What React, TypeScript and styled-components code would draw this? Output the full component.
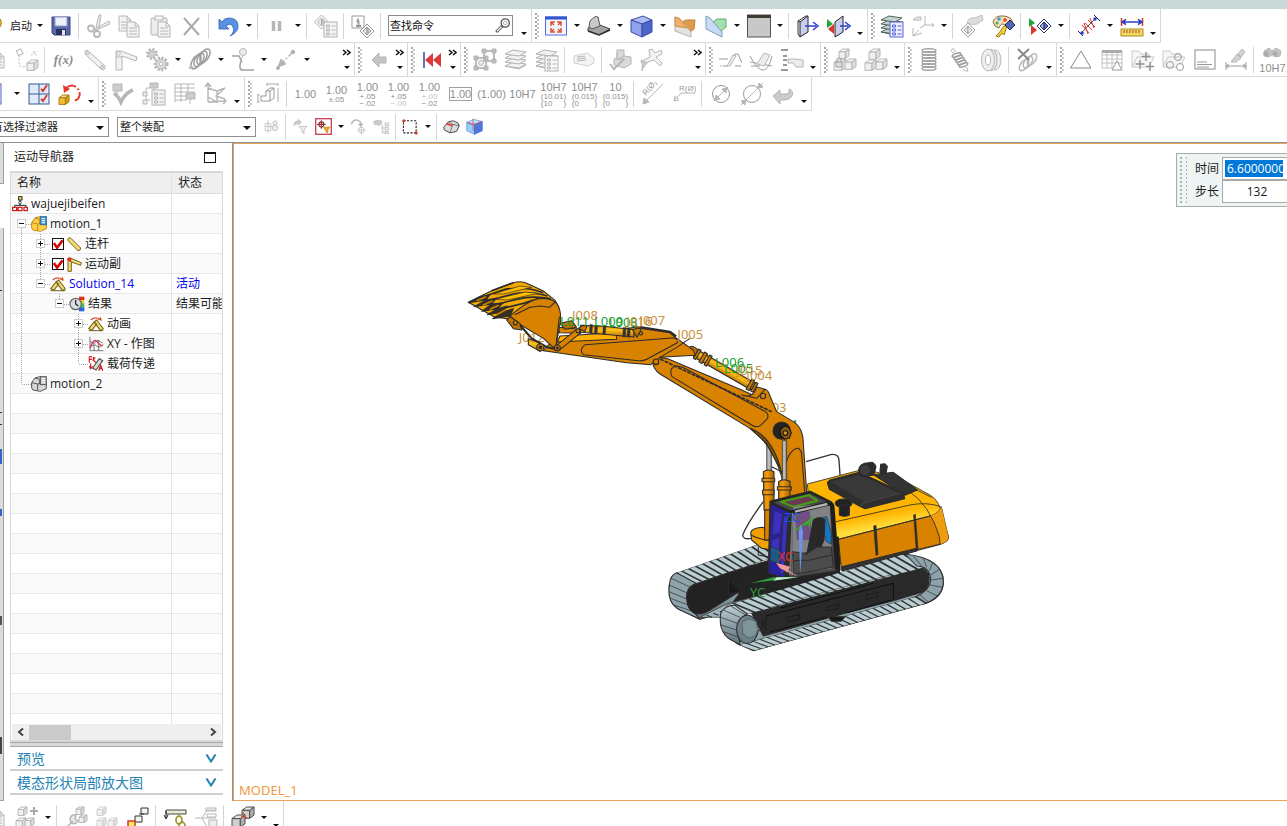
import React, { ReactNode } from "react";
import styled, { createGlobalStyle, css } from "styled-components";

const GlobalStyle = createGlobalStyle`
  * { box-sizing: border-box; }
  html, body { margin: 0; padding: 0; }
  body {
    background: #fff;
    color: #1c1c1c;
    font: 12px/16px "Open Sans", "Noto Sans CJK SC", sans-serif;
    overflow: hidden;
  }
  button, input, select { font: inherit; color: inherit; margin: 0; padding: 0; }
`;

/* ---------- icons, all on a 24 unit grid ---------- */

const F = "#ececec";
const D = "#b2b2b2";

const doc = (x: number, y: number) => (
  <>
    <path d={`M${x} ${y}h8l4 4v11h-12z`} fill="#f4f4f4" />
    <path d={`M${x + 2} ${y + 6}h8M${x + 2} ${y + 9}h8M${x + 2} ${y + 12}h8M${x + 8} ${y}v4h4`} />
  </>
);

const cube = (x: number, y: number, s: number, top = "#fafafa", left = "#f0f0f0", right = "#dedede") => (
  <>
    <path d={`M${x} ${y + s * 0.28}l${s * 0.38} ${-s * 0.28}h${s * 0.62}l${-s * 0.36} ${s * 0.28}z`} fill={top} />
    <path d={`M${x} ${y + s * 0.28}h${s * 0.64}v${s * 0.66}h${-s * 0.64}z`} fill={left} />
    <path d={`M${x + s * 0.64} ${y + s * 0.28}l${s * 0.36} ${-s * 0.28}v${s * 0.68}l${-s * 0.36} ${s * 0.26}z`} fill={right} />
  </>
);

const diamond = (x: number, y: number, edge: string, fill: string, core: string) => (
  <>
    <path d={`M${x - 7} ${y}l7-7 7 7-7 7z`} fill="#fafafa" stroke={edge} />
    <path d={`M${x - 4} ${y}l4-4v8z`} fill={fill} stroke={edge} />
    <path d={`M${x + 4} ${y}l-4-4v8z`} fill={core} stroke={edge} />
  </>
);

const layers = (edge: string, fill: string) => (
  <>
    {[17, 13, 9, 5].map((y) => (
      <path key={y} d={`M1 ${y + 1}l8-4 13 2-7 4z`} fill={fill} stroke={edge} />
    ))}
    <path d="M1 18l14 3 7-4" stroke={edge} />
  </>
);

const listCard = (edge: string, fill: string) => (
  <>
    <rect x="10" y="8" width="13" height="15" fill={fill} stroke={edge} />
    <path d="M12.500 11h3v2h-3zM12.500 15h3v2h-3zM12.500 19h3v2h-3zM17.500 12h4M17.500 16h4M17.500 20h4" stroke={edge} />
  </>
);

const gear = (x: number, y: number, r: number) => (
  <>
    <circle cx={x} cy={y} r={r} strokeWidth="3" strokeDasharray="2 1.500" />
    <circle cx={x} cy={y} r={r - 1} fill="#dcdcdc" />
    <circle cx={x} cy={y} r={r / 3} fill="#fff" />
  </>
);

const icons: Record<string, ReactNode> = {
  logo: (
    <>
      <path d="M12 2q10 1 8 9l-7 12q-8-1-8-8z" fill="#f3c31d" stroke="#a07a10" />
      <path d="M13 5q5 1 3 6l-5 5" stroke="#3b9bd0" strokeWidth="3" />
      <path d="M7 16l5 6" stroke="#2f8c3b" strokeWidth="2" />
    </>
  ),
  save: (
    <>
      <path d="M3 3h18v18h-16l-2-2z" fill="#5868a8" stroke="#38457f" />
      <rect x="6" y="3" width="12" height="9" fill="#eef1f8" stroke="#8f9bc8" />
      <rect x="7" y="15" width="10" height="6" fill="#26305c" stroke="none" />
      <rect x="13" y="16" width="3" height="5" fill="#dfe4f2" stroke="none" />
    </>
  ),
  cut: (
    <>
      <path d="M13 1l2 0-2 13-3-1zM23 7l-14 8 1 1 14-6z" fill={F} />
      <circle cx="5" cy="14.500" r="3" strokeWidth="1.800" />
      <circle cx="11" cy="20" r="3" strokeWidth="1.800" />
    </>
  ),
  copy: <>{doc(2, 2)}{doc(10, 8)}</>,
  paste: (
    <>
      <rect x="3" y="4" width="16" height="17" rx="1" fill={F} />
      <rect x="7" y="2" width="8" height="4" fill="#f6f6f6" />
      {doc(10, 8)}
    </>
  ),
  del: <path d="M5 4l15 17M20 4l-15 17" strokeWidth="2" stroke="#a9a9a9" />,
  undo: <path d="M3 5v10h10l-3-3q5-4 7 1t-3 9q9-4 8-11t-9-7q-5 0-7 4z" fill="#5b8fe0" stroke="#2b62bd" strokeWidth=".8" />,
  pause: <path d="M8.500 7v10M14.500 7v10" strokeWidth="3.500" />,
  repeat: <>{diamond(7.500, 8, D, F, "#c4c4c4")}{listCard(D, "#f4f4f4")}</>,
  info: (
    <>
      <rect x="1" y="2" width="12" height="12" stroke="#999" />
      <path d="M7 4.500v2M5.500 7.500h2v4M5 12h5" strokeWidth="1.800" stroke="#999" />
      {diamond(16, 17, "#999", F, "#c4c4c4")}
    </>
  ),
  search: (
    <>
      <circle cx="15" cy="8" r="5.500" stroke="#555" strokeWidth="1.800" />
      <circle cx="15" cy="8" r="2.500" stroke="#999" />
      <path d="M11 12l-8 8" stroke="#555" strokeWidth="4" />
      <path d="M10 13l-6 6" stroke="#fff" strokeWidth="1.500" />
    </>
  ),
  fit: (
    <>
      <rect x="1.500" y="3" width="21" height="18" fill="#f4f6ff" stroke="#4a6ad8" />
      <path d="M1 4h22" stroke="#3154cf" strokeWidth="3" />
      <path d="M7 12v-4h4M7 8l3 3M17 12v-4h-4M17 8l-3 3M7 14v4h4M7 18l3-3M17 14v4h-4M17 18l-3-3" stroke="#e0542c" strokeWidth="1.500" />
    </>
  ),
  shadeBase: (
    <>
      <path d="M1 14l12-3 10 4-11 6-11-4z" fill="#a4a4a4" stroke="#444" />
      <path d="M2 13l1-6q5-6 8-4l2 9-8 3z" fill="#c9c9c9" stroke="#555" />
      <path d="M1 17l11 4 11-5" stroke="#333" strokeWidth="1.500" />
    </>
  ),
  cubeBlue: (
    <>
      <path d="M1 6l12-4 9 4-10 4z" fill="#aabcf6" stroke="#3c4da8" />
      <path d="M1 6l11 4v13l-11-5z" fill="#8fa3ec" stroke="#3c4da8" />
      <path d="M12 10l10-4v12l-10 5z" fill="#4c66c8" stroke="#3c4da8" />
    </>
  ),
  clipOrange: (
    <>
      <path d="M9 8l4-2h9l-1 9-5 4z" fill="#e09a4c" stroke="#c08040" />
      <path d="M2 3l4 1 12 14v5l-16-6z" fill="#e4e2de" stroke="#b4b4b4" />
      <path d="M2 3l5 2 7 9-12-2z" fill="#f2b06a" stroke="#d0904a" />
    </>
  ),
  clipGreen: (
    <>
      <path d="M9 8l4-3h9v8l-6 5z" fill="#a4e0ac" stroke="#5aa868" />
      <path d="M2 2l4 2 12 14v5l-16-8z" fill="#c6dcf4" stroke="#7d9bc0" />
    </>
  ),
  background: (
    <>
      <rect x="0.500" y="1" width="23" height="22" fill="#c8c8c8" stroke="#55524c" />
      <path d="M0 2.500h24" stroke="#3f3d33" strokeWidth="3" />
    </>
  ),
  door: (
    <>
      <path d="M4 8l8-6v16l-8 5z" fill="#c6cef0" stroke="#222" />
      <path d="M4 8l-2-1v13l2 3M2 7l8-5h2" stroke="#333" />
      <path d="M9 12h11M17 8l5 4-5 4" stroke="#2b3fd0" strokeWidth="1.500" />
    </>
  ),
  doorSwap: (
    <>
      <path d="M8 8l8-6v16l-8 5z" fill="#c6cef0" stroke="#222" />
      <path d="M13 12h8M18 8l5 4-5 4" stroke="#2b3fd0" strokeWidth="1.500" />
      <path d="M0 5l6 5-6 4z" fill="#1ea83a" stroke="none" />
      <path d="M7 10v10l-6-5z" fill="#d8372c" stroke="none" />
    </>
  ),
  layerSettings: <>{layers("#4d6458", "#c4d6cb")}{listCard("#5561d8", "#eef0ff")}</>,
  layerStack: layers(D, "#f2f2f2"),
  layerCard: <>{layers(D, "#f2f2f2")}{listCard(D, "#f8f8f8")}</>,
  wcs: (
    <>
      <path d="M14 2v9h9M14 11l-5 3M21 9l2 2-2 2M2 14v8l9-3M2 22l6-6" />
      <path d="M2 6q3-4 8-3v3z" fill={F} />
    </>
  ),
  editObj: (
    <>
      {diamond(8, 16, "#a4a4a4", F, "#eee")}
      <path d="M7 8q2-5 8-4l7-3 1 5-6 4q-6 2-10-2z" fill="#dcdcdc" stroke="#c4c4c4" />
    </>
  ),
  palette: (
    <>
      <path d="M2 8q2-7 11-6t9 9q-4 3-8 0t-6 3q-5-1-6-6z" fill="#f6dcb6" stroke="#8c6a3c" />
      <circle cx="8" cy="5" r="1.800" fill="#2aa3d8" stroke="none" />
      <circle cx="14" cy="6" r="1.800" fill="#e23a2a" stroke="none" />
      <circle cx="6" cy="9" r="1.500" fill="#3bb04a" stroke="none" />
      <path d="M13 12l-5 7-3 3 3 1 3-4 2 2 3-9z" fill="#f4cf3a" stroke="#9a7a14" />
      <path d="M14 11l5-5 5 5-5 5z" fill="#5568b8" stroke="#222a5c" />
    </>
  ),
  showHide: (
    <>
      <path d="M1 4l6 5-6 4z" fill="#1ea83a" stroke="none" />
      <path d="M3 11l6 5-6 5z" fill="#d8372c" stroke="none" />
      {diamond(16, 12, "#26306a", "#aab6ea", "#5a6cc8")}
    </>
  ),
  measureArrow: (
    <>
      <path d="M3 20l17-17" stroke="#555" />
      <path d="M1 17l5 5M17 1l6 6" stroke="#222" />
      <path d="M5 11l7 8M8 9l7 7M11 6l7 7M7 9l4 11M13 4l4 10" stroke="#d8372c" />
      <circle cx="5" cy="19" r="1.800" fill="#2b3fd0" stroke="none" />
      <circle cx="18" cy="5" r="1.800" fill="#2b3fd0" stroke="none" />
    </>
  ),
  ruler: (
    <>
      <path d="M1.500 4v8M22.500 4v8" stroke="#d8372c" strokeWidth="1.500" />
      <path d="M3 8h18M6 5.500l-4 2.500 4 2.500M18 5.500l4 2.500-4 2.500" stroke="#2b3fc0" strokeWidth="1.500" />
      <rect x="1" y="15" width="22" height="7" fill="#f2d860" stroke="#b09020" />
      <path d="M4 16v3M7 16v3M10 16v3M13 16v3M16 16v3M19 16v3" stroke="#b0452a" />
    </>
  ),
  docSmall: doc(8, 5),
  linkCubes: (
    <>
      <rect x="2" y="2" width="5" height="5" transform="rotate(-25 4 4)" />
      <path d="M4 7v10l3 3M8 19l6-2M16 7l6-4M18 3l4 5" strokeDasharray="2 1.500" />
      {cube(12, 12, 11)}
    </>
  ),
  link: (
    <>
      <path d="M4 2l18 16q1 4-3 4l-17-16q-1-4 2-4z" fill="#f2f2f2" />
      <circle cx="5" cy="5" r="1.500" /><circle cx="19" cy="19" r="1.500" />
    </>
  ),
  joint: (
    <>
      <path d="M2 3h5l16 6-1 4-14-5v14h-6z" fill="#f2f2f2" />
      <circle cx="4.500" cy="5.500" r="1.800" fill="#fff" />
      <path d="M2 9h6" />
    </>
  ),
  gears: <>{gear(7, 6, 4.500)}{gear(16, 16, 6)}</>,
  spring: (
    <>
      {[0, 3, 6, 9].map((o) => <ellipse key={o} cx={8 + o} cy={14 - o * 0.7} rx="4" ry="7.500" transform={`rotate(30 ${8 + o} ${14 - o * 0.7})`} strokeWidth="1.500" stroke="#9c9c9c" />)}
      <path d="M1 20l4-1" strokeWidth="2" />
    </>
  ),
  probe: (
    <>
      <path d="M1 8h7l3 6M10 13q-3 9 2 9h11" strokeWidth="1.500" stroke="#a0a0a0" />
      <circle cx="12" cy="4" r="3.500" fill={F} />
      <path d="M12 7l-3 8" />
    </>
  ),
  vector: (
    <>
      <path d="M4 19l15-15" strokeWidth="1.500" strokeDasharray="9 2 2 2" />
      <path d="M4 19l3-8 5 5z" fill={D} />
      <circle cx="19" cy="4" r="1.800" fill="#aaa" /><circle cx="4" cy="20" r="1.500" fill="#aaa" />
    </>
  ),
  arrowLeft: <path d="M5 12l7-7v4h7v6h-7v4z" fill="#c4c4c4" stroke="#b4b4b4" />,
  rewind: (
    <>
      <path d="M4 4v16" stroke="#39469c" strokeWidth="1.500" />
      <path d="M13 5v14l-8-7zM21 5v14l-8-7z" fill="#d93a3a" stroke="none" />
    </>
  ),
  group: (
    <>
      <rect x="3" y="10" width="10" height="10" strokeWidth="1.800" />
      <rect x="11" y="3" width="10" height="10" strokeWidth="1.800" />
      <path d="M1 8h4v4h-4zM11 8h4v4h-4zM1 18h4v4h-4zM11 18h4v4h-4zM19 1h4v4h-4zM9 1h4v4h-4zM19 11h4v4h-4z" fill="#bbb" />
      <circle cx="8" cy="15" r="2.500" fill={F} />
    </>
  ),
  tag: (
    <>
      <path d="M2 8l13-3 7 5v5l-6 3-14-3z" fill="#f4f4f4" stroke="#d0d0d0" />
      <path d="M5 9l8-1M5 11l9-1M5 13l9-1" />
    </>
  ),
  checkPart: (
    <>
      <path d="M8 2h7v6l7 1v7l-7 4-10-3v-6l3-1z" fill="#dadada" />
      <path d="M8 4v7h8M15 8l-7 4" />
      <path d="M1 16l4 5 10-10" strokeWidth="2" />
    </>
  ),
  movePart: (
    <>
      <path d="M9 2l3-1 3 4 6-3 1 4-6 3 6 6-2 3-6-6-9 3q-3 2-3 8 0-8 2-11l6-3z" fill="#f2f2f2" />
      <path d="M1 12l6 3-4 5z" fill="#ccc" />
    </>
  ),
  sketchA: <><path d="M1 11h9M5 18h5l7-12h3l4 9M17 18h6" stroke="#999" /><path d="M2 18l2 0M9 18l6-11 3 1-6 10z" fill={F} /></>,
  sketchB: (
    <>
      <path d="M1 8q6 12 12 14t10-14M2 18h9M1 14l22 4" stroke="#a0a0a0" />
      <path d="M8 16l7-11 6 2-6 11z" fill={F} />
    </>
  ),
  pointer: (
    <>
      <path d="M1 2h7M1 22h7M3 8h4M3 12h4M3 17h4" strokeWidth="1.800" stroke="#999" />
      <path d="M8 11h7l8 1v7h-7l-3-4h-5z" fill={F} />
    </>
  ),
  asmLock: <>{cube(6, 1, 10)}{cube(1, 11, 12)}{cube(12, 11, 11)}<path d="M4 14v-3q2-3 4 0v3M3 14h6v5h-6z" fill="#ddd" stroke="#a0a0a0" /></>,
  asmPart: <>{cube(5, 1, 11)}{cube(1, 12, 11)}{cube(12, 11, 11)}</>,
  coil: (
    <>
      {[2, 5, 8, 11, 14, 17, 20].map((y) => <ellipse key={y} cx="12" cy={y + 0.5} rx="7" ry="1.800" strokeWidth="1.400" stroke="#a0a0a0" />)}
    </>
  ),
  tension: (
    <>
      {[0, 2.500, 5, 7.500, 10].map((o) => <ellipse key={o} cx={8.500 + o * 0.7} cy={7 + o} rx="4.500" ry="1.600" transform={`rotate(-20 ${8.500 + o * 0.7} ${7 + o})`} strokeWidth="1.500" stroke="#a0a0a0" />)}
      <path d="M7 6q-5-2-3-5 3-1 3 3M16 18q4 1 4 5-3 1-5-2" />
    </>
  ),
  disc: (
    <>
      <ellipse cx="16" cy="12" rx="6" ry="10" fill={F} /><ellipse cx="12" cy="12" rx="6" ry="10.500" fill={F} />
      <ellipse cx="9" cy="12" rx="6.500" ry="11" fill="#efefef" /><ellipse cx="9" cy="12" rx="2.500" ry="5" fill="#fff" />
    </>
  ),
  coilDel: (
    <>
      {[0, 4, 8].map((o) => <ellipse key={o} cx={8 + o} cy={17 - o * 0.7} rx="3.500" ry="6.500" transform={`rotate(35 ${8 + o} ${17 - o * 0.7})`} strokeWidth="1.500" />)}
      <path d="M2 1l11 11M13 1l-11 10" stroke="#8a8a8a" strokeWidth="2" />
    </>
  ),
  triangle: <path d="M12 3l10 17h-20.500z" stroke="#888" />,
  gridTri: (
    <>
      <path d="M2 3h20v17h-20zM2 7h20M2 11h20M2 15h20M7 3v17M12 3v17M17 3v17" stroke="#c0c0c0" />
      <path d="M2 3.500h20" stroke="#aaa" strokeWidth="3" /><path d="M17 13l5 9h-10z" fill="#fff" stroke="#999" />
    </>
  ),
  folderPlus: (
    <>
      <path d="M1 19v-16h7l2 3h8v3M1 19l5-10h17l-5 10z" fill="#f6f6f6" stroke="#cacaca" />
      <path d="M15 4v9M10.500 8.500h9M9 12v9M4.500 16h9M19 14v9M15 18.500h8" stroke="#8f8f8f" strokeWidth="1.400" />
    </>
  ),
  folderRing: (
    <>
      <path d="M1 19v-16h7l2 3h8v3M1 19l5-10h17l-5 10z" fill="#f6f6f6" stroke="#cacaca" />
      <circle cx="16" cy="9" r="3.500" stroke="#999" /><circle cx="8" cy="17" r="3.500" stroke="#999" /><circle cx="18" cy="19" r="3.500" fill="#fff" stroke="#999" />
    </>
  ),
  note: <><rect x="2" y="2" width="20" height="19" stroke="#888" fill="#fff" /><path d="M4 14h10M4 16.500h15M4 19h12" stroke="#999" /></>,
  brush: (
    <>
      <path d="M18 1l3 3-4 5-3-3zM13 6l4 4-5 4h-5z" fill="#d2d2d2" />
      <path d="M2 14v8M22 14v8M2 18h20M5 16l-3 2 3 2M19 16l3 2-3 2" stroke="#999" />
    </>
  ),
  navCheck: (
    <>
      <path d="M2 2h9v7h-9z" fill="#ccc" /><path d="M6 9v4" />
      <path d="M3 11q5 4 7 9 4-9 12-12" strokeWidth="3.500" />
    </>
  ),
  navList: <><path d="M8 1h8v5h-8z" fill="#ccc" /><path d="M12 6v4M4 6v12h4M4 6h4" />{listCard(D, "#f2f2f2")}<path d="M1 10h4v4h-4zM1 18h4v4h-4z" fill={F} /></>,
  navGrid: (
    <>
      <path d="M2 2h20M2 6h20M2 10h20M2 14h12M2 18h12M2 2v18M8 2v18M15 2v12" />
      <path d="M13 11h9v6h-9zM17 17v5" fill="#ccc" />
    </>
  ),
  axis3d: <path d="M4 20v-18M1 5l3-4 3 4M4 20l18-1M4 6l9 3v11l-9-5M13 9l8-3-9 8 9 3M19 16l3 3-3 3" strokeWidth="1.400" />,
  dimPart: (
    <>
      <path d="M9 9h4v10h-9v-5h5zM13 9l4-3v10l-4 3M9 9l4-3h4" stroke="#999" />
      <path d="M1 13v7M0 13h3M0 20h3M10 2h11M10 1v3M21 1v3M21 6v14" stroke="#aaa" />
    </>
  ),
  leader: <><path d="M2 22l20-20M2 22l1-6 5 4z" fill="#bbb" /><text x="0" y="0" transform="translate(5 14) rotate(-50)" fontSize="8" fill="#999" stroke="none" fontFamily="Liberation Sans">R(Ø)</text></>,
  leaderFlat: <><path d="M2 19l7-8h14M2 19l1-5 4 4z" fill="none" /><text x="7" y="9" fontSize="8" fill="#999" stroke="none" fontFamily="Liberation Sans">R(Ø)</text></>,
  diaIn: <><circle cx="12" cy="12" r="8.500" stroke="#999" /><path d="M5 19l14-14M6 18l1-5 4 4zM18 6l-1 5-4-4z" fill="#bbb" /></>,
  diaOut: <><circle cx="12" cy="12" r="8.500" stroke="#999" /><path d="M1 23l22-22M6 18l-5 1 4 4zM18 6l5-1-4-4z" fill="#bbb" /></>,
  back: <path d="M2 14l7-6v4h7q3-1 2-5 5 2 3 7-2 4-8 4h-4v4z" fill="#ccc" stroke="#b4b4b4" />,
  frame: <rect x="0" y="2" width="17" height="20" stroke="#5561c8" fill="#f2f4ff" />,
  checks: (
    <>
      <rect x="2" y="2" width="20" height="20" fill="#dfeafd" stroke="#3d5a94" />
      <path d="M12 2v20M2 12h20" stroke="#3d5a94" />
      <path d="M14 7l2 2 4-6M14 17l2 2 4-6" stroke="#d8372c" strokeWidth="1.800" />
    </>
  ),
  rotateCube: (
    <>
      <g stroke="#a87c14">{cube(1, 13, 10, "#ffe58a", "#f5bf33", "#d69a18")}</g>
      <path d="M8 6q6-5 11 0t1 11l-4 2" stroke="#e23a2a" strokeWidth="1.800" strokeDasharray="11 2 2 2" />
      <path d="M5 3l1 8 6-4z" fill="#e23a2a" stroke="none" />
    </>
  ),
  selAsm: <><path d="M3 8h8v10h-8zM7 3v18M3 12h10" /><circle cx="17" cy="7" r="3" fill={F} /><circle cx="17" cy="14" r="4" fill={F} /></>,
  filterRedo: <><path d="M3 8q1-4 6-4v-2l4 4-4 4v-2q-4-1-6 3z" fill="#ccc" /><path d="M10 12h11l-4 5v5l-3-2v-3z" fill={F} /></>,
  filterTarget: (
    <>
      <rect x="1" y="1" width="22" height="22" stroke="#c43a50" strokeWidth="1.800" fill="#fff" />
      <circle cx="9" cy="9" r="3.500" stroke="#8a3030" strokeWidth="1.500" /><path d="M9 3v12M3 9h12" stroke="#8a3030" strokeWidth="1.500" />
      <path d="M12 13h9l-3 4v4l-3-2v-2z" fill="#f4a824" stroke="#c07c10" />
    </>
  ),
  redoTarget: <><path d="M2 9q2-7 8-6t5 7M12 8l3 3 3-3" strokeWidth="2" /><circle cx="16" cy="17" r="4" /><path d="M16 11v12M10 17h12" /></>,
  handTree: <><path d="M1 5q6-4 12 0l-3 5-8-1z" fill="#ccc" /><path d="M13 9v12h4M13 14h4M17 7h5v4h-5zM17 13h5v4h-5zM17 19h5v3h-5z" fill={F} /></>,
  marquee: (
    <>
      <rect x="2" y="4" width="18" height="17" stroke="#222" strokeWidth="1.500" strokeDasharray="3 2" />
      <circle cx="2.500" cy="4" r="2.200" fill="#d8372c" stroke="none" /><circle cx="20" cy="21" r="2.200" fill="#d8372c" stroke="none" />
    </>
  ),
  eraser: (
    <>
      <path d="M1 13l7-8q7-3 13 2l2 4-4 8-9 2-8-4z" fill="#dcdcdc" stroke="#4a4a4a" strokeWidth="1.400" />
      <path d="M10 20l4-11 9 2M14 9l-6-3" stroke="#4a4a4a" /><path d="M5 8l8 3" stroke="#e23a2a" strokeWidth="2.500" />
    </>
  ),
  cubeRed: (
    <>
      <path d="M1 6l10-4 12 3-11 4z" fill="#bfe2ff" stroke="#6a8ad0" /><path d="M1 6l11 3v14l-11-5z" fill="#8fd0ff" stroke="#6a8ad0" />
      <path d="M12 9l11-4v13l-11 5z" fill="#4a78e0" stroke="#4a6ab8" /><path d="M10 1v17M2 7l9 3M12 9l10-4" stroke="#e24a5a" strokeWidth="1.200" />
    </>
  ),
  addPart: <>{cube(3, 1, 9)}{cube(1, 12, 10)}{cube(10, 12, 9)}<path d="M19 1v8M15 5h8" stroke="#aaa" strokeWidth="2" /></>,
  wrench: <><path d="M1 23l8-8M6 13q1-5 6-4l-1 4 3 2q-3 4-7 2z" fill={F} strokeWidth="1.500" />{cube(12, 1, 8)}{cube(15, 9, 8)}</>,
  partsFade: <g stroke="#cfcfcf">{cube(2, 1, 9)}{cube(2, 12, 9)}{cube(13, 12, 9)}</g>,
  stairs: (
    <>
      <path d="M9 10h7v6h-7zM15 2h7v6h-7z" fill="#f4f4f4" stroke="#333" />
      <path d="M13 8h5" stroke="#333" /><rect x="2" y="15" width="7" height="8" fill="#ffe85a" stroke="#d8372c" strokeWidth="1.500" />
    </>
  ),
  constraint: (
    <>
      <path d="M3 4h20v4h-20z" fill="#e8ecd8" stroke="#444" /><path d="M3 5v7M1 9l2 4 2-4" stroke="#222" />
      <ellipse cx="16" cy="14" rx="3" ry="4" stroke="#a0983a" strokeWidth="1.800" /><ellipse cx="19" cy="20" rx="3" ry="4" stroke="#a0983a" strokeWidth="1.800" />
    </>
  ),
  tree: <><path d="M1 12h7l5-8h9M8 12h14M8 12l5 9h2M12 2h10v3h-10zM13 8h9v3h-9z" fill="none" /><rect x="15" y="14" width="8" height="9" fill={F} /></>,
  boxesDark: (
    <>
      <g stroke="#4c4c4c">{cube(11, 1, 12, "#e4e4e4", "#cfcfcf", "#b0b0b0")}{cube(1, 9, 13, "#e4e4e4", "#cfcfcf", "#b0b0b0")}</g>
      <path d="M12 6l3 6M10 10l6 2" stroke="#e23a2a" />
    </>
  ),
  binoculars: <><path d="M4 5l5-3 3 3 4-3 5 3-1 5-4 1-3-3-4 3-4-1z" fill="#c4c4c4" /><circle cx="6" cy="8" r="2.500" fill="#aaa" /><circle cx="15" cy="8" r="2.500" fill="#aaa" /></>,
  /* tree glyphs */
  tRoot: (
    <g strokeWidth="1.500">
      <rect x="10" y="1" width="5" height="5" stroke="#222" fill="#ffe85a" /><path d="M12 6v9M4 17v-3h17v3" stroke="#222" />
      <circle cx="12" cy="10" r="2" stroke="#444" fill="#fff" />
      <path d="M1 17h6v5h-6zM9 17h6v5h-6zM18 17h5v5h-5z" fill="#fff" stroke="#d02020" strokeWidth="2" />
    </g>
  ),
  tMotion: (
    <g strokeWidth="1.500" stroke="#c08a10">
      <path d="M1 10l5-7 7-2 5 2 5 6v10l-9 4-11-2-2-3z" fill="#ffcf4a" /><path d="M1 10l9 2 13-3M10 12v10M6 3l7 2v7" />
      <rect x="14" y="1" width="9" height="12" fill="#4a9ad0" stroke="#2c6c98" /><path d="M16 4h5M16 7h5M16 10h5" stroke="#fff" />
    </g>
  ),
  tMotionGray: (
    <g strokeWidth="1.500" stroke="#555">
      <path d="M1 10l5-7 7-2 5 2 5 6v10l-9 4-11-2-2-3z" fill="#d8d8d8" /><path d="M1 10l9 2 13-3M10 12v10M6 3l7 2v7" />
      <rect x="14" y="1" width="9" height="12" fill="#c4c4c4" /><path d="M16 4h5M16 7h5M16 10h5" stroke="#fff" />
    </g>
  ),
  tLink: <path d="M3 4q3-3 5 0l14 14q0 4-4 4l-14-14q-2-2-1-4z" fill="#f3d978" stroke="#7a6418" strokeWidth="1.500" />,
  tJoint: (
    <g strokeWidth="1.500">
      <path d="M3 4h5v19h-5z" fill="#f3d978" stroke="#7a6418" /><path d="M6 3l17 7-1 4-16-6z" fill="#f3d978" stroke="#7a6418" />
      <circle cx="5" cy="5" r="3" fill="#e02c20" stroke="none" />
    </g>
  ),
  tSolution: (
    <g strokeWidth="1.600">
      <path d="M1 19l8-10 4 3-7 9zM9 9l4-3 10 13-4 3z" fill="#f3d978" stroke="#7a6418" /><path d="M1 22h22" stroke="#7a6418" />
      <path d="M4 6q7-6 13-1" stroke="#e0502c" strokeWidth="2" /><path d="M21 7l-6-1 4-5z" fill="#e0502c" stroke="none" />
    </g>
  ),
  tResult: (
    <>
      <rect x="15" y="1" width="8" height="5" fill="#e02c20" stroke="none" /><rect x="15" y="6" width="8" height="5" fill="#f5d020" stroke="none" />
      <rect x="15" y="11" width="8" height="6" fill="#3fc04a" stroke="none" /><rect x="15" y="17" width="8" height="6" fill="#2a62e0" stroke="none" />
      <circle cx="10" cy="12" r="8.500" fill="#d8dce4" stroke="#666" strokeWidth="1.800" /><path d="M10 6v6l4 3" stroke="#222" strokeWidth="1.800" />
    </>
  ),
  tPlot: (
    <g strokeWidth="1.500">
      <path d="M3 1v21h20M3 8l6 3 6-5 7 5M3 16l7-3 6 4 7-4M9 11v11M16 6v16" stroke="#777" /><path d="M3 18q6-15 10-10t9 7" stroke="#e02c50" strokeWidth="2" />
    </g>
  ),
  tLoad: (
    <g strokeWidth="1.800">
      <path d="M7 18l10-14 5 3-10 14z" fill="#ddd" stroke="#555" /><path d="M2 1h4M2 1v9M2 5h4M8 1v7M11 2l-3 4 4 4M4 11v8M2 15l2 4 3-3M16 22l3-8 3 8M17 19h5" stroke="#d02020" />
    </g>
  ),
};

const Glyph = styled.svg<{ $size?: number }>`
  display: block;
  flex: none;
  width: ${(p) => p.$size ?? 24}px;
  height: ${(p) => p.$size ?? 24}px;
  fill: none;
  stroke: #b6b6b6;
`;

const Icon = ({ name, size }: { name: string; size?: number }) => (
  <Glyph $size={size} viewBox="0 0 24 24" aria-hidden="true">
    {icons[name]}
  </Glyph>
);

/* ---------- tool bars ---------- */

const Page = styled.div`
  height: 100vh;
  display: flex;
  flex-direction: column;
  overflow: hidden;
`;

const TitleStrip = styled.header`
  flex: none;
  height: 9px;
  background: #c9d9d7;
`;

const Row = styled.div<{ $height?: number }>`
  flex: none;
  display: flex;
  height: ${(p) => p.$height ?? 34}px;
  overflow: hidden;
`;

const Group = styled.div<{ $pull?: number; $open?: boolean }>`
  flex: none;
  display: flex;
  align-items: center;
  height: 34px;
  margin-left: ${(p) => -(p.$pull ?? 0)}px;
  padding-right: 1px;
  border-right: 1px solid ${(p) => (p.$open ? "transparent" : "#d8d8d8")};
  border-bottom: 1px solid #dcdcdc;
`;

const Grip = styled.span<{ $tall?: boolean }>`
  flex: none;
  width: 8px;
  height: ${(p) => (p.$tall ? 46 : 26)}px;
  background:
    radial-gradient(circle at 1px 1px, #a8a8a8 1px, transparent 1px) 3px 0 / 4px 4px repeat-y,
    radial-gradient(circle at 1px 1px, #c8c8c8 1px, transparent 1px) 5px 2px / 4px 4px repeat-y;
  ${(p) =>
    p.$tall &&
    css`background:
      radial-gradient(circle at 1px 1px, #b0b4b4 1px, transparent 1px) 1px 0 / 6px 4px;`}
`;

const ToolButton = styled.button<{ $small?: boolean }>`
  flex: none;
  display: flex;
  align-items: center;
  justify-content: center;
  width: ${(p) => (p.$small ? 23 : 31)}px;
  height: 30px;
  border: 0;
  background: none;
`;

const DropButton = styled.button<{ $low?: boolean; $width?: number }>`
  flex: none;
  display: flex;
  flex-direction: column;
  align-items: flex-end;
  justify-content: ${(p) => (p.$low ? "flex-end" : "center")};
  width: ${(p) => p.$width ?? 12}px;
  height: 30px;
  padding: 0 3px ${(p) => (p.$low ? 6 : 0)}px;
  border: 0;
  background: none;
`;

const Arrow = styled.span`
  width: 0;
  height: 0;
  border: 3px solid transparent;
  border-top-color: #111;
  border-bottom-width: 0;
`;

const Divider = styled.span`
  flex: none;
  width: 6px;
  height: 26px;
  background: linear-gradient(#d4d4d4, #d4d4d4) 2px 0 / 1px 100% no-repeat;
`;

const MoreMark = styled.svg`
  width: 9px;
  height: 7px;
  margin-bottom: 10px;
  margin-right: -1px;
  fill: none;
  stroke: #111;
  stroke-width: 1.5;
`;

const Tool = ({ icon, label, small }: { icon: string; label: string; small?: boolean }) => (
  <ToolButton type="button" aria-label={label} $small={small}>
    <Icon name={icon} size={small ? 17 : 24} />
  </ToolButton>
);
const Drop = () => (
  <DropButton type="button" aria-label="下拉">
    <Arrow />
  </DropButton>
);
const Options = () => (
  <DropButton type="button" aria-label="工具条选项" $low>
    <Arrow />
  </DropButton>
);
const More = ({ width }: { width?: number }) => (
  <DropButton type="button" aria-label="更多" $low $width={width}>
    <MoreMark viewBox="0 0 9 7">
      <path d="M1 1l3 2.500-3 2.500M5 1l3 2.500-3 2.500" />
    </MoreMark>
    <Arrow />
  </DropButton>
);

const StartButton = styled.button`
  flex: none;
  display: flex;
  align-items: center;
  width: 64px;
  height: 30px;
  gap: 5px;
  border: 0;
  background: none;
  font-size: 11px;
`;

const SearchBox = styled.label`
  flex: none;
  display: flex;
  align-items: center;
  width: 125px;
  height: 21px;
  margin: 0 5px 0 4px;
  border: 1px solid #8a8a8a;
  background: #fff;
`;

const SearchInput = styled.input`
  flex: 1;
  min-width: 0;
  height: 19px;
  padding-left: 1px;
  border: 0;
  outline: 0;
  background: none;
  font-size: 11px;
  &::placeholder { color: #111; opacity: 1; }
`;

const DimText = styled.span<{ $boxed?: boolean }>`
  color: #8e8e8e;
  font: 11px/12px "Liberation Sans", sans-serif;
  white-space: nowrap;
  ${(p) => p.$boxed && css`border: 1px solid #a0a0a0;`}
`;
const DimStack = styled.span`
  display: flex;
  flex-direction: column;
  align-items: center;
`;
const DimTol = styled.span<{ $faint?: boolean }>`
  color: ${(p) => (p.$faint ? "#c4c4c4" : "#8e8e8e")};
  font: 8px/7px "Liberation Sans", sans-serif;
  white-space: pre;
`;

type DimSpec = { main: string; tol?: string[]; faint?: number[]; boxed?: boolean };
const dims: DimSpec[] = [
  { main: "1.00" },
  { main: "1.00", tol: ["±.05"] },
  { main: "1.00", tol: ["+.05", "−.02"] },
  { main: "1.00", tol: ["+.05", "−.00"], faint: [1] },
  { main: "1.00", tol: ["+.00", "−.02"], faint: [0] },
  { main: "1.00", boxed: true },
  { main: "(1.00)" },
  { main: "10H7" },
  { main: "10H7", tol: ["(10.01)", "(10     )"] },
  { main: "10H7", tol: ["(0.015)", "(0       )"] },
  { main: "10", tol: ["(0.015)", "(0       )"] },
];

const Dim = ({ main, tol, faint, boxed }: DimSpec) => (
  <ToolButton type="button">
    <DimStack>
      <DimText $boxed={boxed}>{main}</DimText>
      {tol?.map((t, i) => (
        <DimTol key={i} $faint={faint?.includes(i)}>{t}</DimTol>
      ))}
    </DimStack>
  </ToolButton>
);

const SelectionRow = styled(Row)`
  align-items: center;
`;

const SelectWrap = styled.label<{ $width: number; $gap: number }>`
  flex: none;
  position: relative;
  width: ${(p) => p.$width}px;
  margin-right: ${(p) => p.$gap}px;
  & > ${Arrow} {
    position: absolute;
    right: 5px;
    top: 9px;
    border-width: 4px 4px 0;
  }
`;

const Select = styled.select`
  display: block;
  appearance: none;
  width: 100%;
  height: 20px;
  padding: 0 2px;
  border: 1px solid #8f8f8f;
  border-radius: 0;
  background: #fff;
  font-size: 11px;
  line-height: 17px;
`;

const Pulled = styled.div`
  display: flex;
  margin-left: -22px;
`;

/* ---------- side panel ---------- */

const Main = styled.main`
  flex: 1;
  min-height: 0;
  display: flex;
  border-top: 1px solid #87929a;
`;

const TabRail = styled.div`
  flex: none;
  width: 4px;
  display: flex;
  flex-direction: column;
`;
const RailPart = styled.div<{ $height?: number; $color?: string; $line?: boolean }>`
  flex: ${(p) => (p.$height ? "none" : 1)};
  height: ${(p) => (p.$height ? `${p.$height}px` : "auto")};
  background: ${(p) => p.$color ?? "#dcdcdc"};
  border-right: ${(p) => (p.$line ? "1px solid #a0a0a0" : "0")};
  border-bottom: ${(p) => (p.$line ? "1px solid #a0a0a0" : "0")};
`;
const RailMark = styled.span<{ $height: number; $gap: number; $color: string }>`
  display: block;
  width: 2px;
  height: ${(p) => p.$height}px;
  margin-top: ${(p) => p.$gap}px;
  background: ${(p) => p.$color};
`;

const Panel = styled.aside`
  flex: none;
  width: 229px;
  padding: 0 10px 6px 6px;
  display: flex;
  flex-direction: column;
`;

const PanelTitle = styled.div`
  flex: none;
  height: 28px;
  display: flex;
  align-items: center;
  justify-content: space-between;
  padding: 0 7px 0 4px;
`;
const Heading = styled.h2`
  margin: 0;
  font-size: 12px;
  font-weight: 400;
`;
const WindowButton = styled.button`
  width: 12px;
  height: 11px;
  border: 1px solid #111;
  border-top-width: 2px;
  background: none;
`;

const TreeFrame = styled.section`
  flex: 1;
  min-height: 0;
  display: flex;
  flex-direction: column;
  border: 1px solid #d8d8d8;
  border-top-width: 2px;
  border-bottom-width: 2px;
`;
const TreeBody = styled.div`
  flex: 1;
  min-height: 0;
  overflow: hidden;
`;
const TreeTable = styled.table`
  width: 100%;
  border-collapse: separate;
  border-spacing: 0;
  table-layout: fixed;
  th, td {
    height: 20px;
    padding: 0;
    border-bottom: 1px solid #e8e8e8;
    font-weight: 400;
    text-align: left;
    white-space: nowrap;
    overflow: hidden;
  }
  th {
    height: 21px;
    padding: 0 6px;
    background: #efefef;
    border-bottom-color: #dcdcdc;
  }
  th + th, td + td {
    border-left: 1px solid #e4e4e4;
    width: 51px;
  }
  td + td { padding-left: 4px; }
  tbody tr:nth-child(even) { background: #fafafa; }
`;

const Node = styled.div<{ $active?: boolean }>`
  display: flex;
  align-items: center;
  height: 19px;
  padding-left: 1px;
  color: ${(p) => (p.$active ? "#0000ee" : "inherit")};
`;
const NodeText = styled.span`
  margin-left: 3px;
`;
const Status = styled.span<{ $active?: boolean }>`
  color: ${(p) => (p.$active ? "#0000ee" : "inherit")};
`;

const dotsV = "repeating-linear-gradient(#aaa 0 1px, transparent 1px 2px)";
const dotsH = "repeating-linear-gradient(90deg, #aaa 0 1px, transparent 1px 2px)";

const Guide = styled.span<{ $kind: string }>`
  flex: none;
  display: flex;
  align-items: center;
  justify-content: center;
  width: 19px;
  height: 20px;
  background-repeat: no-repeat;
  ${(p) =>
    p.$kind === "pipe" && css`background-image: ${dotsV}; background-size: 1px 20px; background-position: 9px 0;`}
  ${(p) =>
    p.$kind === "tee" && css`background-image: ${dotsV}, ${dotsH}; background-size: 1px 20px, 9px 1px; background-position: 9px 0, 10px 10px;`}
  ${(p) =>
    p.$kind === "end" && css`background-image: ${dotsV}, ${dotsH}; background-size: 1px 10px, 9px 1px; background-position: 9px 0, 10px 10px;`}
  ${(p) =>
    p.$kind === "first" && css`background-image: ${dotsV}, ${dotsH}; background-size: 1px 10px, 9px 1px; background-position: 9px 10px, 10px 10px;`}
`;

const Expander = styled.button`
  width: 9px;
  height: 9px;
  border: 1px solid #ccc;
  background: #fff;
  svg { display: block; stroke: #111; }
`;

const TreeCheck = styled.input`
  flex: none;
  appearance: none;
  width: 12px;
  height: 12px;
  margin: 0 2px;
  border: 1px solid #111;
  background: #fff
    url("data:image/svg+xml,%3Csvg xmlns='http://www.w3.org/2000/svg' viewBox='0 0 12 12'%3E%3Cpath d='M1.500 5l3.500 5 6-8' fill='none' stroke='%23e00000' stroke-width='2.800'/%3E%3C/svg%3E")
    center / 11px 11px;
`;

type NodeSpec = {
  icon: string;
  label: string;
  guides: string[];
  sign?: "+" | "-";
  check?: boolean;
  active?: boolean;
  status?: string;
};
const nodes: NodeSpec[] = [
  { icon: "tRoot", label: "wajuejibeifen", guides: [] },
  { icon: "tMotion", label: "motion_1", guides: ["first"], sign: "-" },
  { icon: "tLink", label: "连杆", guides: ["pipe", "tee"], sign: "+", check: true },
  { icon: "tJoint", label: "运动副", guides: ["pipe", "tee"], sign: "+", check: true },
  { icon: "tSolution", label: "Solution_14", guides: ["pipe", "end"], sign: "-", active: true, status: "活动" },
  { icon: "tResult", label: "结果", guides: ["pipe", "none", "end"], sign: "-", status: "结果可能" },
  { icon: "tSolution", label: "动画", guides: ["pipe", "none", "none", "tee"], sign: "+" },
  { icon: "tPlot", label: "XY - 作图", guides: ["pipe", "none", "none", "tee"], sign: "+" },
  { icon: "tLoad", label: "载荷传递", guides: ["pipe", "none", "none", "end"] },
  { icon: "tMotionGray", label: "motion_2", guides: ["end"] },
];

const ScrollBar = styled.div`
  flex: none;
  display: flex;
  align-items: center;
  height: 16px;
  margin: 0 1px;
  background: #efefef;
`;
const ScrollArrow = styled.button`
  width: 17px;
  height: 16px;
  border: 0;
  background: none;
  svg { display: block; margin: 0 auto; fill: none; stroke: #444; stroke-width: 2; }
`;
const ScrollTrack = styled.div`
  flex: 1;
  height: 15px;
`;
const ScrollThumb = styled.div`
  width: 42px;
  height: 15px;
  background: #cbcbcb;
`;

const Splitter = styled.div`
  flex: none;
  height: 5px;
  border: 1px solid #a8a8a8;
  border-left-width: 0;
  border-right-width: 0;
  background: #d8d8d8;
`;

const Section = styled.button`
  flex: none;
  display: flex;
  align-items: center;
  justify-content: space-between;
  height: 24px;
  padding: 1px 6px 0 7px;
  border: 0;
  border-bottom: 2px solid #d0d0d0;
  background: none;
  color: #2483b5;
  font-size: 14px;
  svg { fill: none; stroke: #2483b5; stroke-width: 2; }
`;

/* ---------- graphics window ---------- */

const Canvas = styled.section`
  flex: 1;
  min-width: 0;
  position: relative;
  overflow: hidden;
  border: 1px solid #eda35c;
  border-right: 0;
  background: #fff;
  box-shadow: -1px 0 0 #87929a;
`;
const ModelName = styled.span`
  position: absolute;
  left: 5px;
  bottom: 2px;
  color: #f0983c;
  font: 13px/16px "Noto Sans", sans-serif;
`;

const Model = styled.svg`
  display: block;
  width: 500px;
  height: 390px;
  margin: 126px 0 0 226px;
  stroke: #2c2c2c;
  stroke-width: 3.2;
  stroke-linejoin: round;
  fill: none;
  text { font: 39px "Noto Sans", sans-serif; stroke: none; }
`;

const TimePanel = styled.form`
  position: absolute;
  top: 9px;
  right: -8px;
  display: flex;
  align-items: center;
  height: 54px;
  padding: 0 2px;
  border: 1px solid #a8acac;
  background: #eff5f5;
`;
const Fields = styled.div`
  display: grid;
  grid-template-columns: 24px 70px;
  column-gap: 3px;
  align-items: center;
  margin-left: 8px;
`;
const Field = styled.input<{ $selected?: boolean }>`
  height: 23px;
  width: 70px;
  padding: 2px;
  border: 1px solid #a8a8a8;
  outline: 0;
  background: #fff;
  text-align: center;
  ${(p) =>
    p.$selected &&
    css`
      padding-right: 8px;
      color: #fff;
      text-align: left;
      text-indent: 2px;
      background: linear-gradient(#0078d7, #0078d7) content-box, #fff;
    `}
`;

const mix = (a: number[], b: number[], t: number) => [a[0] + (b[0] - a[0]) * t, a[1] + (b[1] - a[1]) * t];

/* Track shoes laid between two edges of a belt. */
const Shoes = ({ a, b, c, d, n, ratio = 0.7 }: { a: number[]; b: number[]; c: number[]; d: number[]; n: number; ratio?: number }) => (
  <>
    <path d={`M${a}L${b}L${d}L${c}Z`} fill="#2f3233" strokeWidth="2" />
    {Array.from({ length: n }, (_, i) => {
      const p = mix(a, b, i / n);
      const q = mix(a, b, (i + ratio) / n);
      const r = mix(c, d, (i + ratio) / n);
      const s = mix(c, d, i / n);
      return <path key={i} d={`M${p}L${q}L${r}L${s}Z`} fill="#b9cdd3" stroke="none" />;
    })}
  </>
);

const Excavator = () => (
  <Model viewBox="0 0 1500 1170" role="img" aria-label="挖掘机">
    <defs>
      <linearGradient id="roof" x1="0" y1="0" x2="0.250" y2="1">
        <stop offset="0" stopColor="#ffb400" />
        <stop offset=".55" stopColor="#ffb400" />
        <stop offset=".68" stopColor="#ffe040" />
        <stop offset=".8" stopColor="#ffb400" />
        <stop offset="1" stopColor="#e89000" />
      </linearGradient>
      <linearGradient id="tube" x1="0" y1="0" x2="0" y2="1">
        <stop offset="0" stopColor="#e08a00" />
        <stop offset=".4" stopColor="#ffc21a" />
        <stop offset="1" stopColor="#b96e00" />
      </linearGradient>
      <linearGradient id="tubeV" x1="0" y1="0" x2="1" y2="0">
        <stop offset="0" stopColor="#d88200" />
        <stop offset=".35" stopColor="#f59c0c" />
        <stop offset="1" stopColor="#a86400" />
      </linearGradient>
      <linearGradient id="rod" x1="0" y1="0" x2="1" y2="0">
        <stop offset="0" stopColor="#8f8f8f" />
        <stop offset=".4" stopColor="#c8c8c8" />
        <stop offset="1" stopColor="#777" />
      </linearGradient>
      <linearGradient id="drum" x1="0" y1="0" x2="0" y2="1">
        <stop offset="0" stopColor="#b9cdd3" />
        <stop offset="1" stopColor="#5f7178" />
      </linearGradient>
    </defs>

    <g fill="#c8923a">
      <text x="176" y="215">J012</text>
      <text x="336" y="151">J008</text>
      <text x="902" y="425">J003</text>
    </g>
    <text x="845" y="465" fill="#18a030">L003</text>
    <text x="925" y="478" fill="#18a030">L004</text>

    {/* far track */}
    <g transform="translate(600 780)">
      <path d="M28 165Q24 220 70 243L120 268Q150 262 200 235L330 190V100L90 130Z" fill="url(#drum)" />
      <Shoes a={[48, 130]} b={[300, 42]} c={[108, 160]} d={[350, 78]} n={12} />
      <path d="M28 165Q30 135 50 128L108 160Q82 175 80 200Q80 235 105 250L120 268L60 240Q20 220 28 165Z" fill="#8fa3ab" />
      <path d="M34 145L92 172M27 165L84 190M27 185L80 207M31 205L84 225M45 226L98 244" strokeWidth="2" />
      <path d="M80 200Q80 165 118 158L200 130L330 90L350 175L230 190L150 240Q120 258 100 248Q80 235 80 200Z" fill="#222" />
      <path d="M205 152L330 130V172L205 192Z" fill="#191919" />
      <path d="M205 150L330 95L540 95V140L360 190L205 235L240 185Z" fill="#232323" stroke="none" />
      <path d="M120 262L200 222L320 190L340 200L180 262Z" fill="#9fb3ba" strokeWidth="2" />
      {[140, 160, 180, 200].map((x) => <path key={x} d={`M${x} ${298 - x * 0.3}l16 6`} />)}
    </g>

    {/* rear handrails */}
    <g transform="translate(810 510)" stroke="#333" strokeWidth="4">
      <path d="M228 65L305 43Q326 42 327 60L330 105" />
      <path d="M100 185Q55 245 38 285Q38 300 65 295" />
    </g>

    {/* machine house */}
    <g transform="translate(810 510)">
      <path d="M62 278Q65 265 95 262L125 268V330L95 325L65 300Z" fill="#f0a000" />
      <path d="M62 285Q90 300 125 302M85 320V345L120 352" />
      <path d="M232 132L400 88L500 110L600 165Q632 185 634 225L655 290Q658 305 630 312L340 385L240 210Z" fill="url(#roof)" strokeWidth="2.500" />
      <path d="M325 298L600 228Q625 222 634 200L655 290Q657 303 632 313L335 392Z" fill="#d98200" strokeWidth="2.500" />
      <path d="M600 228Q625 222 634 200L655 290Q657 303 632 313Q632 270 600 228Z" fill="#f09c10" stroke="none" />
      <path d="M318 245L540 195Q590 185 632 200M325 298L600 228M535 152Q600 195 628 290L630 315M560 150L605 172M334 382L632 312" strokeWidth="2.500" />
      <path d="M336 380L560 325V333L338 392Z" fill="#333" />
      <path d="M431 258l7-2 6 88-6 2zM551 225l5-2 8 106-5 2z" fill="#2c2c2c" strokeWidth="2" />
      <path d="M430 104L490 97L562 150L525 166Z" fill="#333" />
      <path d="M292 128L300 120L388 97L520 158L524 176L405 206L388 198L298 148Z" fill="#2e2e2e" />
      <path d="M298 124L390 102L512 160L402 188Z" fill="#393939" />
      <path d="M392 198L402 188L512 160" stroke="#484848" />
      <path d="M386 90Q390 68 415 68Q432 62 438 80L432 105L400 110L388 105Z" fill="#2b2b2b" />
      <circle cx="405" cy="90" r="17" fill="#3d3d3d" />
      <path d="M450 95l2-22 12-2 8 8-4 22-14 2z" fill="#2e2e2e" />
      <ellipse cx="341" cy="190" rx="25" ry="13" fill="#222" />
      <path d="M328 195h30v30q-15 8-30 0z" fill="#222" />
    </g>

    {/* near track */}
    <g transform="translate(600 780)">
      <path d="M715 85Q850 80 850 155Q850 205 790 222L280 362L230 340L300 300L700 190Z" fill="#8fa3aa" />
      <path d="M270 240L740 118Q800 100 806 140Q812 180 770 190L310 318Z" fill="#2a2a2a" />
      <Shoes a={[200, 226]} b={[735, 72]} c={[262, 252]} d={[800, 110]} n={22} />
      <path d="M735 72Q850 85 850 155Q850 200 792 222L755 205Q812 185 812 145Q808 110 770 108Z" fill="#8da2aa" />
      <path d="M760 78L785 108M790 85L800 112M818 98L808 122M838 118L812 135M849 145L814 150M848 172L810 165M832 198L800 182M805 216L780 195" strokeWidth="2" />
      <Shoes a={[240, 345]} b={[770, 200]} c={[285, 361]} d={[800, 219]} n={25} ratio={0.75} />
      <path d="M318 258L700 155L806 130Q810 165 790 185L700 212L330 306Z" fill="#292929" />
      <path d="M318 258L700 160V210M318 262V300M360 235L640 160M330 306L500 262M560 248L695 210" stroke="#111" />
      <path d="M330 232L480 190L640 148L700 133" stroke="#555" strokeWidth="2" />
      <path d="M382 262l36-9v14l-36 8zM500 230l36-9v14l-36 8zM618 195l36-9v14l-36 8z" stroke="#151515" strokeWidth="2" />
      <path d="M505 260h50l-12 14h-28z" fill="#161616" />
      <path d="M182 250Q195 225 225 226L262 252Q225 270 240 345L205 325Q175 300 182 250Z" fill="url(#drum)" />
      <path d="M190 240L240 262M182 262L232 280M180 284L230 300M190 305L236 322M212 228L255 254" strokeWidth="2" />
      <ellipse cx="262" cy="298" rx="32" ry="42" fill="#6e8087" />
      <path d="M246 276l20-10 22 8 6 24-8 20-20 6-18-12z" fill="#7f959b" stroke="#55676d" />
      <path d="M300 265l18 4v24l-14 6z" fill="#222" />
    </g>

    {/* boom base cylinders */}
    <g transform="translate(540 120)">
      <path d="M380 400h15v90h-15z" fill="url(#rod)" strokeWidth="2" />
      <path d="M370 485q15-10 32 0v115h-30z" fill="url(#tubeV)" />
      <path d="M366 505h38v10h-38zM368 540h34v14h-34z" fill="url(#tubeV)" />
      <path d="M374 600v90h22v-90z" fill="#d98200" />
    </g>

    {/* boom */}
    <g transform="translate(540 120)" fill="#d98200">
      <path d="M38 150Q50 136 85 147L300 238L345 258L375 238Q385 240 390 258L410 305L465 338Q490 358 490 400L500 548L455 570L432 570L425 500Q395 400 330 355L60 192Q36 175 38 150Z" />
      <path d="M330 355Q400 380 425 490L422 478Q400 440 380 400Z" fill="#8a5200" />
      <path d="M112 168Q84 172 96 200L335 345Q350 355 362 346L382 326Q388 312 375 304L128 172Z" />
      <path d="M425 490L445 440Q460 412 476 415L484 425L494 545M395 470L425 485" fill="none" />
      <path d="M60 147L395 305" strokeWidth="5" strokeDasharray="12 3" />
      <circle cx="48" cy="156" r="8" />
      <circle cx="369" cy="258" r="8" />
      <path d="M305 255Q340 268 350 230L375 238L350 265Z" />
      <circle cx="425" cy="362" r="26" fill="#222" />
      <path d="M420 360l12-12 14 4 8 16-6 16-14 4-12-12z" fill="#8a5a14" stroke="#111" />
      <circle cx="436" cy="369" r="7" fill="#d9a030" stroke="#111" />
    </g>
    <g transform="translate(540 120)">
      <path d="M427 392h13v125h-13z" fill="url(#rod)" strokeWidth="2" />
      <path d="M416 514q16-10 34 0v55h-34z" fill="url(#tubeV)" />
      <path d="M412 530h42v10h-42z" fill="url(#tubeV)" />
    </g>

    {/* stick cylinder */}
    <g transform="translate(690 238) rotate(30)">
      <rect x="20" y="-10" width="200" height="24" fill="url(#tube)" />
      <path d="M22-14h8v32h-8zM42-15h10v34h-10zM60-15h8v34h-8zM205-15h10v34h-10zM220-13h8v30h-8z" fill="#c87800" />
      <rect x="-4" y="-12" width="26" height="24" rx="10" fill="#c87800" />
    </g>

    {/* stick */}
    <g fill="#d98200">
      <path d="M470 182L530 170L625 185L650 205L700 240L706 256L600 262L572 284L500 278L250 242L265 225L290 214L465 205Z" />
      <path d="M540 172L630 186L648 200" strokeWidth="8" />
      <path d="M375 224L635 204Q655 203 652 218L560 268Q548 274 535 272L370 254Q355 240 375 224Z" />
      <path d="M600 262L650 232L690 205" fill="none" />
      <path d="M300 198L468 188L470 208L292 216Z" fill="#ffb000" />
      <circle cx="588" cy="275" r="8" />
      <circle cx="543" cy="190" r="5" />
    </g>

    {/* bucket cylinder and links */}
    <g>
      <path d="M295 172L360 178L362 190L298 188Z" fill="#d98200" />
      <path d="M362 166l70 3 90 10v22l-90-8-70-6z" fill="url(#tube)" />
      <path d="M390 163l8 1-2 26-8-1zM405 165l8 1-2 26-8-1zM430 167l8 1-2 26-8-1zM490 172l8 1-2 28-8-1zM503 173l8 1-2 28-8-1z" fill="#333" strokeWidth="1" />
      <path d="M355 175q15-15 25-5l-5 15zM518 180q20-10 25 0l-12 22z" fill="#c87800" />
      <path d="M282 232L350 178Q362 178 360 190L296 242Z" fill="#d98200" />
      <path d="M300 160l35-8 15 20-35 6z" fill="#b87000" />
      <circle cx="354" cy="182" r="6" fill="#d98200" />
    </g>

    {/* bucket */}
    <g>
      <path d="M25 97L95 62L160 38Q185 31 205 42L252 64L286 92L296 112L180 150L105 142Z" fill="#f5a800" />
      <path d="M95 62L160 38M70 80L135 58Q195 48 250 68M75 95L160 72Q205 62 262 78M90 108L170 88Q215 76 272 86M108 120L190 100L235 86" strokeWidth="5" />
      <path d="M100 72L180 48L215 52L130 72ZM105 88L195 66L235 70L140 90Z" fill="#ffbe00" strokeWidth="2" />
      <path d="M25 98L60 80L90 74L78 90ZM42 110L80 90L110 84L95 102ZM65 124L95 102L130 98L112 116ZM82 134L112 116L142 108L128 126ZM98 146L128 126L160 116L150 138Z" fill="#3a3020" />
      <path d="M50 92l28-12M68 106l30-14M90 118l26-12M110 134l26-14" stroke="#c98200" strokeWidth="5" />
      <path d="M150 138Q205 90 238 86Q268 82 288 98Q303 115 302 150L288 228L280 232L250 205L178 162Z" fill="#d98200" />
      <path d="M165 134L210 112L240 108L268 112L286 96M298 140L288 228" fill="none" />
      <path d="M140 150L150 140L180 160L186 180L160 176Z" fill="#c07000" />
      <circle cx="166" cy="158" r="6" fill="#d98200" />
      <path d="M205 206L240 218L252 232L240 244L205 224Z" fill="url(#tube)" />
      <path d="M180 165L215 205L262 232L300 240" strokeWidth="6" />
      <circle cx="241" cy="232" r="11" fill="#c87800" /><circle cx="241" cy="232" r="4" fill="#222" />
      <circle cx="292" cy="234" r="9" fill="#d98200" /><circle cx="292" cy="234" r="3" fill="#222" />
    </g>

    {/* cab */}
    <g transform="translate(810 510)">
      <path d="M120 185L240 155L300 185L322 392L175 415L115 400Z" fill="#4a4a4a" />
      <path d="M152 185L238 166L262 182L190 200Z" fill="#6a3a55" stroke="#44a010" strokeWidth="6" />
      <path d="M190 200L300 190L306 385L185 405Z" fill="#808284" stroke="none" />
      <path d="M195 205L240 215L245 300L200 300Z" fill="#705080" stroke="none" />
      <path d="M268 235L290 230L304 280V312L290 305Z" fill="#1678c0" strokeWidth="2" />
      <path d="M250 240Q268 225 285 240L282 300L262 345L232 335Z" fill="#282828" />
      <path d="M188 335L225 340L262 320L304 322L310 380L225 398L190 402Z" fill="#4c4c4c" />
      <path d="M225 345L262 320M240 360L305 345M190 362L240 360" />
      <path d="M122 190L182 218L166 414L116 400Z" fill="#2a20a0" />
      <path d="M132 210L158 222L150 280L126 285ZM124 300L150 290L146 350L122 358ZM160 225L174 230L162 400L150 402Z" fill="#3c30c0" strokeWidth="2" />
      <path d="M122 320L150 330L148 372L120 362Z" fill="#1b5a88" strokeWidth="2" />
      <path d="M182 218L296 190Q306 190 307 200L322 390" stroke="#1e1e1e" strokeWidth="13" />
      <path d="M182 218L170 412" stroke="#2c2c2c" strokeWidth="16" />
      <path d="M188 218L180 405" stroke="#777" strokeWidth="5" />
      <path d="M195 215L292 192" stroke="#b4b4b4" strokeWidth="7" />
      <path d="M120 186L240 156L304 188M122 188L182 216" stroke="#262626" strokeWidth="8" />
      <path d="M322 290L328 392" stroke="#1e1e1e" strokeWidth="8" />
      <path d="M196 272L250 232M225 255L238 245M238 262V240" stroke="#38b020" strokeWidth="5" />
      {/* work coordinate system */}
      <path d="M213 252L206 275L211 402L219 275Z" fill="#6f92f0" stroke="none" />
      <path d="M208 412L138 368L150 385Z" fill="#f0989c" stroke="none" />
      <path d="M138 368l42 12-8 18z" fill="#f0989c" stroke="none" />
      <path d="M204 412L60 430L130 412Z" fill="#28a83a" stroke="none" />
      <path d="M204 412L130 422L140 412Z" fill="#c8efcc" stroke="none" />
    </g>
    <text x="953" y="872" fill="#e03030">XC</text>
    <text x="973" y="757" fill="#1a52e8">ZC</text>
    <text x="870" y="980" fill="#2a9a3a">YC</text>

    <g fill="#18a030">
      <text x="300" y="169">L011</text>
      <text x="402" y="169">L009</text>
      <text x="446" y="171">L008</text>
      <text x="765" y="290">L006</text>
      <text x="792" y="308">L005</text>
    </g>
    <g fill="#c8923a">
      <text x="499" y="169">J016</text>
      <text x="538" y="166">J007</text>
      <text x="652" y="207">J005</text>
      <text x="830" y="316">J015</text>
      <text x="859" y="331">J004</text>
    </g>
  </Model>
);

const Sign = ({ sign }: { sign: "+" | "-" }) => (
  <Expander type="button" aria-label={sign === "+" ? "展开" : "折叠"}>
    <svg width="7" height="7" viewBox="0 0 7 7" shapeRendering="crispEdges">
      <path d={sign === "+" ? "M1 3.500h5M3.500 1v5" : "M1 3.500h5"} />
    </svg>
  </Expander>
);

const Chevron = () => (
  <svg width="12" height="9" viewBox="0 0 12 9" aria-hidden="true">
    <path d="M1.500 0.500l4.500 7 4.500-7" />
  </svg>
);

const FindStack = styled(DimStack)`
  svg { margin-bottom: -8px; }
`;

const Formula = styled.span`
  color: #8c8c8c;
  font: italic bold 13px/16px "Liberation Serif", serif;
`;

export default function App() {
  return (
    <Page>
      <GlobalStyle />
      <TitleStrip />
      <Row>
        <Group $pull={19}>
          <StartButton type="button"><Icon name="logo" />启动<Arrow /></StartButton>
          <Tool icon="save" label="保存" /><Divider />
          <Tool icon="cut" label="剪切" /><Tool icon="copy" label="复制" /><Tool icon="paste" label="粘贴" /><Tool icon="del" label="删除" /><Divider />
          <Tool icon="undo" label="撤消" /><Drop /><Divider />
          <Tool icon="pause" label="暂停" /><Drop /><Divider />
          <Tool icon="repeat" label="重复命令" /><Divider />
          <Tool icon="info" label="信息" /><Divider />
          <SearchBox>
            <SearchInput placeholder="查找命令" aria-label="查找命令" />
            <Icon name="search" size={18} />
          </SearchBox>
          <Options />
        </Group>
        <Group>
          <Grip />
          <Tool icon="fit" label="适合窗口" /><Drop />
          <Tool icon="shadeBase" label="渲染样式" /><Drop />
          <Tool icon="cubeBlue" label="定向视图" /><Drop />
          <Tool icon="clipOrange" label="剪切截面" />
          <Tool icon="clipGreen" label="编辑截面" /><Drop />
          <Tool icon="background" label="背景" /><Drop /><Divider />
          <Tool icon="door" label="显示" /><Tool icon="doorSwap" label="切换显示" /><Options />
        </Group>
        <Group>
          <Grip />
          <Tool icon="layerSettings" label="图层设置" /><Tool icon="wcs" label="坐标系" /><Drop /><Divider />
          <Tool icon="editObj" label="编辑对象" /><Tool icon="palette" label="对象显示" /><Divider />
          <Tool icon="showHide" label="显示和隐藏" /><Drop /><Divider />
          <Tool icon="measureArrow" label="测量距离" /><Drop /><Tool icon="ruler" label="标尺" /><Options />
        </Group>
      </Row>
      <Row>
        <Group $pull={20}>
          <Tool icon="docSmall" label="环境" /><Tool icon="linkCubes" label="主模型" /><Divider />
          <ToolButton type="button"><Formula>f(x)</Formula></ToolButton>
          <Tool icon="link" label="连杆" /><Tool icon="joint" label="运动副" />
          <Tool icon="gears" label="齿轮副" /><Drop /><Tool icon="spring" label="弹簧" /><Drop />
          <Tool icon="probe" label="传感器" /><Drop /><Tool icon="vector" label="矢量力" /><Drop />
          <More width={40} />
        </Group>
        <Group><Grip /><Tool icon="arrowLeft" label="上一步" /><More /></Group>
        <Group><Grip /><Tool icon="rewind" label="第一步" /><More /></Group>
        <Group>
          <Grip />
          <Tool icon="group" label="成组" /><Tool icon="layerStack" label="图层" /><Tool icon="layerCard" label="图层类别" /><Divider />
          <Tool icon="tag" label="标签" /><Divider />
          <Tool icon="checkPart" label="检查" /><Tool icon="movePart" label="移动" /><More width={37} />
        </Group>
        <Group><Grip /><Tool icon="sketchA" label="直接草图" /><Tool icon="sketchB" label="曲面" /><Tool icon="pointer" label="选择" /><Options /></Group>
        <Group><Grip /><Tool icon="asmLock" label="锁定组件" /><Tool icon="asmPart" label="组件" /><Options /></Group>
        <Group>
          <Grip /><Tool icon="coil" label="压缩弹簧" /><Tool icon="tension" label="拉伸弹簧" /><Tool icon="disc" label="碟形弹簧" /><Divider />
          <Tool icon="coilDel" label="删除弹簧" /><Options />
        </Group>
        <Group $open>
          <Grip /><Tool icon="triangle" label="符号" /><Tool icon="gridTri" label="表格" /><Tool icon="folderPlus" label="添加" />
          <Tool icon="folderRing" label="分组" /><Tool icon="note" label="注释" /><Tool icon="brush" label="格式刷" /><Divider />
          <ToolButton type="button"><FindStack><Icon name="binoculars" /><DimText>10H7</DimText></FindStack></ToolButton>
        </Group>
      </Row>
      <Row>
        <Group $pull={20}>
          <Tool icon="frame" label="视图" /><Drop /><Tool icon="checks" label="多选" /><Tool icon="rotateCube" label="旋转" /><Options />
        </Group>
        <Group>
          <Grip /><Tool icon="navCheck" label="检查" /><Tool icon="navList" label="列表" /><Tool icon="navGrid" label="表格" /><Tool icon="axis3d" label="坐标" /><Options />
        </Group>
        <Group>
          <Grip /><Tool icon="dimPart" label="尺寸" /><Divider />
          {dims.map((d, i) => <Dim key={i} {...d} />)}
          <Divider />
          <Tool icon="leader" label="半径" /><Tool icon="leaderFlat" label="折线半径" /><Divider />
          <Tool icon="diaIn" label="直径" /><Tool icon="diaOut" label="外直径" /><Tool icon="back" label="返回" /><Options />
        </Group>
      </Row>
      <SelectionRow $height={31}>
        <Pulled>
          <SelectWrap $width={131} $gap={8}>
            <Select aria-label="选择过滤器"><option>没有选择过滤器</option></Select>
            <Arrow />
          </SelectWrap>
        </Pulled>
        <SelectWrap $width={139} $gap={4}>
          <Select aria-label="选择范围"><option>整个装配</option></Select>
          <Arrow />
        </SelectWrap>
        <Tool small icon="selAsm" label="装配" /><Divider />
        <Tool small icon="filterRedo" label="重置过滤器" /><Tool small icon="filterTarget" label="选择意图" /><Drop />
        <Tool small icon="redoTarget" label="还原" /><Tool small icon="handTree" label="导航" /><Divider />
        <Tool small icon="marquee" label="框选" /><Drop /><Divider />
        <Tool small icon="eraser" label="面" /><Tool small icon="cubeRed" label="体" />
      </SelectionRow>

      <Main>
        <TabRail>
          <RailPart $height={41} $line />
          <RailPart $height={44} $color="#fff" />
          <RailPart $line>
            <RailMark $gap={62} $height={1} $color="#333" />
            <RailMark $gap={121} $height={1} $color="#333" />
            <RailMark $gap={11} $height={1} $color="#333" />
            <RailMark $gap={24} $height={15} $color="#3464c8" />
            <RailMark $gap={45} $height={7} $color="#3464c8" />
            <RailMark $gap={100} $height={9} $color="#555" />
            <RailMark $gap={112} $height={17} $color="#444" />
          </RailPart>
        </TabRail>
        <Panel>
          <PanelTitle>
            <Heading>运动导航器</Heading>
            <WindowButton type="button" aria-label="最大化" />
          </PanelTitle>
          <TreeFrame>
            <TreeBody>
              <TreeTable>
                <thead>
                  <tr><th>名称</th><th>状态</th></tr>
                </thead>
                <tbody>
                  {nodes.map((n) => (
                    <tr key={n.label}>
                      <td>
                        <Node $active={n.active}>
                          {n.guides.map((k, i) => (
                            <Guide key={i} $kind={k}>
                              {n.sign && i === n.guides.length - 1 && <Sign sign={n.sign} />}
                            </Guide>
                          ))}
                          {n.check && <TreeCheck type="checkbox" defaultChecked aria-label={n.label} />}
                          <Icon name={n.icon} size={16} />
                          <NodeText>{n.label}</NodeText>
                        </Node>
                      </td>
                      <td><Status $active={n.active}>{n.status}</Status></td>
                    </tr>
                  ))}
                  {Array.from({ length: 17 }, (_, i) => <tr key={i}><td /><td /></tr>)}
                </tbody>
              </TreeTable>
            </TreeBody>
            <ScrollBar>
              <ScrollArrow type="button" aria-label="向左"><svg width="8" height="8"><path d="M6 0.500l-4 3.500 4 3.500" /></svg></ScrollArrow>
              <ScrollTrack><ScrollThumb /></ScrollTrack>
              <ScrollArrow type="button" aria-label="向右"><svg width="8" height="8"><path d="M2 0.500l4 3.500-4 3.500" /></svg></ScrollArrow>
            </ScrollBar>
          </TreeFrame>
          <Splitter />
          <Section type="button">预览<Chevron /></Section>
          <Section type="button">模态形状局部放大图<Chevron /></Section>
        </Panel>
        <Canvas>
          <Excavator />
          <ModelName>MODEL_1</ModelName>
          <TimePanel>
            <Grip $tall />
            <Fields>
              <label htmlFor="time">时间</label>
              <Field id="time" $selected defaultValue="6.60000000" />
              <label htmlFor="step">步长</label>
              <Field id="step" defaultValue="132" />
            </Fields>
          </TimePanel>
        </Canvas>
      </Main>

      <Row $height={25}>
        <Group $pull={20}>
          <Tool icon="docSmall" label="新建" /><Tool icon="addPart" label="添加组件" /><Drop /><Divider />
          <Tool icon="wrench" label="编辑组件" /><Tool icon="partsFade" label="阵列组件" /><Tool icon="stairs" label="移动组件" /><Divider />
          <Tool icon="constraint" label="装配约束" /><Tool icon="tree" label="装配树" /><Divider />
          <Tool icon="boxesDark" label="爆炸图" /><Drop /><Options />
        </Group>
      </Row>
    </Page>
  );
}
